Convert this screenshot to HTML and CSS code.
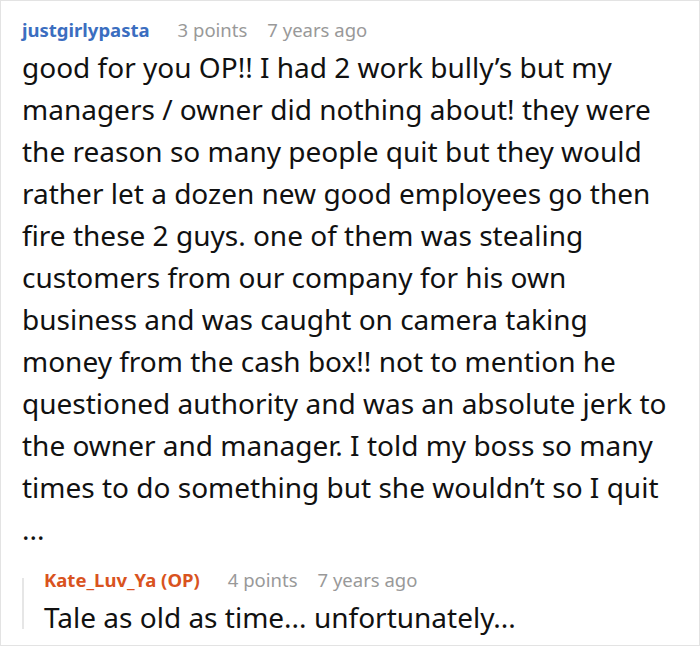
FILE: index.html
```html
<!DOCTYPE html>
<html>
<head>
<meta charset="utf-8">
<link rel="stylesheet" href="styles.css">
</head>
<body>
<div class="comment">
  <div class="meta">
    <span class="author">justgirlypasta</span>
    <span class="info">3 points</span>
    <span class="info">7 years ago</span>
  </div>
  <p class="text">good for you OP!! I had 2 work bully’s but my managers / owner did nothing about! they were the reason so many people quit but they would rather let a dozen new good employees go then fire these 2 guys. one of them was stealing customers from our company for his own business and was caught on camera taking money from the cash box!! not to mention he questioned authority and was an absolute jerk to the owner and manager. I told my boss so many times to do something but she wouldn’t so I quit</p>
  <p class="text more">...</p>
  <div class="reply">
    <div class="meta">
      <span class="author op">Kate_Luv_Ya (OP)</span>
      <span class="info">4 points</span>
      <span class="info">7 years ago</span>
    </div>
    <p class="text reply-text">Tale as old as time... unfortunately...</p>
  </div>
</div>
</body>
</html>
```
FILE: styles.css
```css
html, body {
  margin: 0;
  padding: 0;
  background: #ffffff;
}
body {
  font-family: "Noto Sans", "Open Sans", sans-serif;
  color: #111111;
}
.comment {
  box-sizing: border-box;
  width: 700px;
  height: 646px;
  border: 1px solid #e3e3e3;
  padding: 17px 24px 0 21px;
  overflow: hidden;
}
.meta {
  display: flex;
  align-items: baseline;
  gap: 20px;
  font-size: 18.5px;
  line-height: 24px;
  height: 24px;
  white-space: nowrap;
}
.author {
  font-weight: 700;
  color: #3b6ec0;
  margin-right: 8px;
}
.author.op {
  color: #d9531e;
}
.info {
  color: #999999;
}
.text {
  margin: 4px 0 0 0;
  font-size: 28px;
  line-height: 42px;
}
.text.more {
  margin-top: 0;
}
.reply {
  position: relative;
  margin-top: 18px;
  padding-left: 22px;
}
.reply::before {
  content: "";
  position: absolute;
  left: 0;
  top: 10px;
  bottom: 9px;
  width: 2px;
  background: #e6e6e6;
}
.reply .reply-text {
  margin-top: 4px;
}
```
